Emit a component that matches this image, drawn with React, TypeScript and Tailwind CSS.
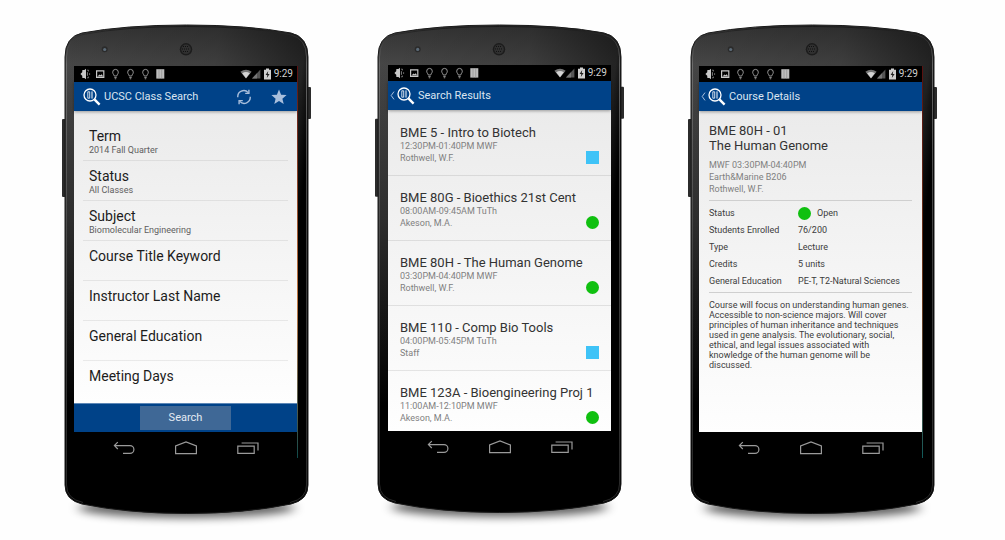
import type { ReactNode } from "react";

function PhoneShell({ id }: { id: string }) {
  const body =
    "M0 32 Q0 12 17 8 Q60 0 121.5 0 Q183 0 226 8 Q243 12 243 32 V460 Q243 475 226 479 Q180 488.5 121.5 488.5 Q63 488.5 17 479 Q0 475 0 460Z";
  return (
    <svg
      className="absolute inset-0 h-full w-full overflow-visible"
      viewBox="0 0 243 489"
      preserveAspectRatio="none"
      aria-hidden="true"
    >
      <defs>
        <linearGradient id={`${id}-body`} x1="0" y1="0" x2="0" y2="1">
          <stop offset="0" stopColor="#333" />
          <stop offset="0.08" stopColor="#464646" />
          <stop offset="0.4" stopColor="#2e2e2e" />
          <stop offset="0.62" stopColor="#141414" />
          <stop offset="0.78" stopColor="#000" />
        </linearGradient>
        <linearGradient id={`${id}-shade`} x1="0" y1="0" x2="1" y2="0.25">
          <stop offset="0" stopColor="#000" stopOpacity="0" />
          <stop offset="0.6" stopColor="#000" stopOpacity="0.12" />
          <stop offset="0.94" stopColor="#000" stopOpacity="0.5" />
          <stop offset="1" stopColor="#000" />
        </linearGradient>
        <linearGradient id={`${id}-rim`} x1="0" y1="0" x2="0" y2="1">
          <stop offset="0" stopColor="#151515" />
          <stop offset="0.08" stopColor="#777" />
          <stop offset="0.5" stopColor="#4a4a4a" />
          <stop offset="1" stopColor="#333" />
        </linearGradient>
        <filter id={`${id}-blur`} x="-20%" y="-100%" width="140%" height="300%">
          <feGaussianBlur stdDeviation="6 4" />
        </filter>
      </defs>
      <ellipse cx="121.5" cy="483" rx="108" ry="10" fill="#000" opacity="0.6" filter={`url(#${id}-blur)`} />
      <rect x="-3" y="94" width="4" height="78" rx="1" fill="#2b2b2b" />
      <rect x="242" y="62" width="4" height="32" rx="1" fill="#2b2b2b" />
      <path d={body} fill={`url(#${id}-body)`} />
      <path d={body} fill={`url(#${id}-shade)`} />
      <path d={body} fill="none" stroke="#1a1a1a" strokeWidth="1" />
      <path
        d="M1.5 32 Q1.5 13.5 18 9.5 Q60 1.5 121.5 1.5 Q183 1.5 225 9.5 Q241.5 13.5 241.5 32 V460 Q241.5 474 225 477.5 M1.5 32 V460 Q1.5 474 18 477.5"
        fill="none"
        stroke={`url(#${id}-rim)`}
        strokeWidth="0.8"
      />
      <circle cx="121" cy="24.3" r="6.2" fill="#1c1c1c" />
      <circle cx="121" cy="24.3" r="4.8" fill="#303030" />
      <path d="M118 21.5h6M117 24h8M118 26.5h6" stroke="#111" strokeWidth="1" strokeDasharray="1 1" />
      <circle cx="39.7" cy="24.3" r="3" fill="#2b2b2b" />
      <circle cx="39.7" cy="24.5" r="1.6" fill="#5c6b78" />
    </svg>
  );
}

function Bulb() {
  return (
    <svg width="11" height="12" viewBox="0 0 11 12" fill="none" stroke="#a5a5a5" strokeWidth="0.9">
      <path d="M4.2 8 C4.2 6.6 2.7 6 2.7 4.2 A2.8 2.8 0 0 1 8.3 4.2 C8.3 6 6.8 6.6 6.8 8Z" />
      <path d="M4.3 9.6h2.4M4.8 10.8h1.4" />
    </svg>
  );
}

function StatusBar() {
  return (
    <div className="flex h-4 items-center justify-between bg-black pr-1 pl-1.5">
      <div className="flex items-center gap-1" aria-hidden="true">
        <svg width="11" height="12" viewBox="0 0 11 12">
          <path d="M6 0.8 L4.4 2 L2.4 2 L2.2 4.2 L0.4 6 L2.2 7.8 L2.4 10 L4.4 10 L6 11.2Z" fill="#c8c8c8" />
          <path d="M7.2 2.2h1.2v1.2M9.6 5.3v1.5M8.4 8.6v1.2H7.2M7.4 4.2v3.6" fill="none" stroke="#8d8d8d" strokeWidth="0.9" />
        </svg>
        <svg width="11" height="12" viewBox="0 0 11 12">
          <path d="M1.6 2.9h7.2v6.4H1.6z" fill="none" stroke="#c8c8c8" strokeWidth="1.2" />
          <path d="M2.5 8.6 L4.4 6.4 L5.5 7.3 L6.8 6.2 L8.2 8.6Z" fill="#c8c8c8" />
        </svg>
        <Bulb />
        <Bulb />
        <Bulb />
        <svg width="11" height="12" viewBox="0 0 11 12">
          <rect x="1.3" y="1.2" width="8" height="9.4" fill="#bdbdbd" />
          <path d="M4 1.2v9.4M6.7 1.2v9.4" stroke="#8a8a8a" strokeWidth="0.6" />
        </svg>
      </div>
      <div className="flex items-center">
        <svg width="12" height="12" viewBox="0 0 12 12" aria-hidden="true">
          <path d="M0.4 3.8 Q6 -0.2 11.6 3.8 L6 10.4Z" fill="#777" />
          <path d="M2.2 5.2 Q6 2.6 9.8 5.2 L6 10.2Z" fill="#d4d4d4" />
        </svg>
        <svg width="10" height="12" viewBox="0 0 10 12" aria-hidden="true">
          <path d="M0 10.5 L8.4 1.6 V10.5Z" fill="#555" />
          <path d="M0 10.5 L5 5.2 V10.5Z" fill="#777" />
        </svg>
        <svg width="12" height="12" viewBox="0 0 12 12" aria-hidden="true">
          <path d="M4 0.6h3v1.2h2v9.6H2V1.8h2z" fill="#cfcfcf" />
          <path d="M6.2 3 L3.6 7 h1.7 L4.8 10 L7.6 5.9 H5.8Z" fill="#222" />
        </svg>
        <span className="text-[10px] leading-4 text-[#d0d0d0]">9:29</span>
      </div>
    </div>
  );
}

function SearchLogo() {
  return (
    <svg width="18" height="18" viewBox="0 0 18 18" fill="none" stroke="#fff" aria-hidden="true">
      <circle cx="7" cy="7" r="6" strokeWidth="1.3" />
      <path d="M4.8 3.8h1.9v6.4H4.8z" strokeWidth="0.8" />
      <path d="M9 3.4v7.2" strokeWidth="1" />
      <path d="M11.4 11.4 L16.6 16.6" strokeWidth="2.4" />
    </svg>
  );
}

function AppBar({ title, back, children }: { title: string; back?: boolean; children?: ReactNode }) {
  const brand = (
    <>
      <span className="flex w-[9px] justify-center">
        {back && (
          <svg width="5" height="9" viewBox="0 0 5 9" fill="none" stroke="#a9bfdc" aria-hidden="true">
            <path d="M4 0.6 L1.2 4.5 L4 8.4" />
          </svg>
        )}
      </span>
      <SearchLogo />
    </>
  );
  return (
    <header className="relative flex h-[29px] items-center bg-[#004288] shadow-[0_1px_3px_rgba(0,0,0,0.35)]">
      {back ? (
        <button type="button" aria-label="Back" className="flex items-center">
          {brand}
        </button>
      ) : (
        <div className="flex items-center">{brand}</div>
      )}
      <h1 className="flex-1 pl-[3px] text-[11px] leading-4 text-[#dbe5f1]">{title}</h1>
      {children}
    </header>
  );
}

function NavBar() {
  return (
    <nav className="flex h-8 items-center justify-center gap-10 text-[#9a9a9a]">
      <button type="button" aria-label="Back">
        <svg width="22" height="14" viewBox="0 0 22 14" fill="none" stroke="currentColor" strokeWidth="1.2">
          <path d="M4.8 1.2 L1.4 4.6 L4.8 8 M1.4 4.6 H17 A3.9 3.9 0 0 1 17 12.4 H10" />
        </svg>
      </button>
      <button type="button" aria-label="Home">
        <svg width="22" height="14" viewBox="0 0 22 14" fill="none" stroke="currentColor" strokeWidth="1.2">
          <path d="M0.6 12.7 V5 L11 1 L21.4 5 V12.7Z" />
        </svg>
      </button>
      <button type="button" aria-label="Recent apps">
        <svg width="22" height="14" viewBox="0 0 22 14" fill="none" stroke="currentColor" strokeWidth="1.2">
          <path d="M0.8 5.2 H17.2 V12.4 H0.8Z M4.6 2 H21 V9.4" />
        </svg>
      </button>
    </nav>
  );
}

function Phone({ id, inset, edge, children }: { id: string; inset: string; edge?: string; children: ReactNode }) {
  return (
    <section className="relative max-w-[280px] min-w-[240px] flex-1">
      <PhoneShell id={id} />
      <div className={`relative pb-[50px] ${inset}`}>
        <div className="relative">
          <StatusBar />
          {children}
          {edge && <div className={`absolute top-0 -right-px -bottom-[26px] w-px ${edge}`} />}
        </div>
        <NavBar />
      </div>
    </section>
  );
}

const fields = [
  { label: "Term", value: "2014 Fall Quarter" },
  { label: "Status", value: "All Classes" },
  { label: "Subject", value: "Biomolecular Engineering" },
  { label: "Course Title Keyword" },
  { label: "Instructor Last Name" },
  { label: "General Education" },
  { label: "Meeting Days" },
];

function SearchScreen() {
  return (
    <>
      <AppBar title="UCSC Class Search">
        <div className="flex items-center gap-[19px] pr-2.5">
          <button type="button" aria-label="Refresh">
            <svg width="16" height="16" viewBox="0 0 16 16" fill="none" stroke="#a9bfdc" strokeWidth="1.4">
              <path d="M1.8 8.2 A6 6 0 0 1 12.2 3.6 M14.2 7.8 A6 6 0 0 1 3.8 12.4" />
              <path d="M12.9 0.8 V4.4 H9.2 M3.1 15.2 V11.6 H6.8" />
            </svg>
          </button>
          <button type="button" aria-label="Favorites">
            <svg width="16" height="16" viewBox="0 0 16 16" fill="#a9bfdc">
              <path d="M8 0.6 L10.1 5.7 L15.6 6.1 L11.4 9.7 L12.7 15 L8 12.1 L3.3 15 L4.6 9.7 L0.4 6.1 L5.9 5.7Z" />
            </svg>
          </button>
        </div>
      </AppBar>
      <div className="bg-linear-to-b from-[#ebebeb] to-[#fefefe] px-[9px] pt-2.5 pb-0.5">
        {fields.map((f) => (
          <button
            key={f.label}
            type="button"
            className="flex min-h-10 w-full flex-col border-b border-black/7 px-1.5 pt-1.5 pb-1 text-left last:border-transparent"
          >
            <span className="text-[14px] leading-[18px] text-[#1c1c1c]">{f.label}</span>
            {f.value && <span className="text-[9px] leading-[11px] text-[#606060]">{f.value}</span>}
          </button>
        ))}
      </div>
      <div className="flex h-[29px] items-center justify-center border-t border-[#5d87b6] bg-[#004288]">
        <button type="button" className="h-6 w-[91px] bg-[#3f6896] text-[11px] leading-4 text-[#e4ebf3]">
          Search
        </button>
      </div>
    </>
  );
}

const courses = [
  { title: "BME 5 - Intro to Biotech", time: "12:30PM-01:40PM MWF", teacher: "Rothwell, W.F.", open: false },
  { title: "BME 80G - Bioethics 21st Cent", time: "08:00AM-09:45AM TuTh", teacher: "Akeson, M.A.", open: true },
  { title: "BME 80H - The Human Genome", time: "03:30PM-04:40PM MWF", teacher: "Rothwell, W.F.", open: true },
  { title: "BME 110 - Comp Bio Tools", time: "04:00PM-05:45PM TuTh", teacher: "Staff", open: false },
  { title: "BME 123A - Bioengineering Proj 1", time: "11:00AM-12:10PM MWF", teacher: "Akeson, M.A.", open: true },
];

function ResultsScreen() {
  return (
    <>
      <AppBar title="Search Results" back />
      <ul className="h-[321px] overflow-hidden bg-linear-to-b from-[#ebebeb] to-[#fefefe] pt-px">
        {courses.map((c) => (
          <li key={c.title}>
            <a href="#details" className="flex items-end border-b border-black/9 px-3 pt-3.5 pb-[11px]">
              <span className="flex min-w-0 flex-1 flex-col whitespace-nowrap text-[9px] leading-3 text-[#808080]">
                <span className="text-[13px] leading-[15px] text-[#333]">{c.title}</span>
                <span>{c.time}</span>
                <span>{c.teacher}</span>
              </span>
              <span className={c.open ? "size-[13px] shrink-0 rounded-full bg-[#10c010]" : "size-[13px] shrink-0 bg-[#3fc3f7]"} />
            </a>
          </li>
        ))}
      </ul>
    </>
  );
}

const details = [
  ["Status", "Open"],
  ["Students Enrolled", "76/200"],
  ["Type", "Lecture"],
  ["Credits", "5 units"],
  ["General Education", "PE-T, T2-Natural Sciences"],
];

function DetailsScreen() {
  return (
    <>
      <AppBar title="Course Details" back />
      <div className="min-h-[321px] bg-linear-to-b from-[#ebebeb] to-[#fefefe] px-2.5 pt-3 text-[9px] text-[#3c3c3c]">
        <h2 className="text-[13px] leading-[15px] text-[#333]">
          BME 80H - 01
          <br />
          The Human Genome
        </h2>
        <p className="mt-1.5 border-b border-[#cfcfcf] pb-[5px] leading-3 text-[#808080]">
          MWF 03:30PM-04:40PM
          <br />
          Earth&amp;Marine B206
          <br />
          Rothwell, W.F.
        </p>
        <table className="mt-1 w-full">
          <tbody>
            {details.map(([label, value]) => (
              <tr key={label} className="leading-[17px]">
                <th scope="row" className="w-[89px] p-0 text-left font-normal">
                  {label}
                </th>
                <td className="p-0 whitespace-nowrap">
                  {label === "Status" ? (
                    <span className="flex items-center gap-1.5">
                      <span className="size-[13px] rounded-full bg-[#10c010]" />
                      {value}
                    </span>
                  ) : (
                    value
                  )}
                </td>
              </tr>
            ))}
          </tbody>
        </table>
        <p className="mt-0.5 border-t border-[#cfcfcf] pt-[7px] leading-[10px]">
          Course will focus on understanding human genes. Accessible to non-science majors. Will cover principles of
          human inheritance and techniques used in gene analysis. The evolutionary, social, ethical, and legal issues
          associated with knowledge of the human genome will be discussed.
        </p>
      </div>
    </>
  );
}

export default function App() {
  return (
    <main className="flex min-h-screen flex-wrap items-start justify-center gap-[70px] bg-[#fefefe] pt-[25px] pr-[71px] pb-[26px] pl-[65px] font-['Roboto',sans-serif]">
      <Phone
        id="search"
        inset="pt-[41px] pl-[9px] pr-[11px]"
        edge="bg-linear-to-b from-[#5a1010] via-[#c07a45] via-60% to-[#0c4a4a]"
      >
        <SearchScreen />
      </Phone>
      <Phone id="results" inset="pt-10 px-2.5">
        <ResultsScreen />
      </Phone>
      <Phone
        id="details"
        inset="pt-[41px] pl-2 pr-3"
        edge="bg-linear-to-b from-[#5a1010] via-[#6b3a1c] via-60% to-[#0c5a5a]"
      >
        <DetailsScreen />
      </Phone>
    </main>
  );
}
